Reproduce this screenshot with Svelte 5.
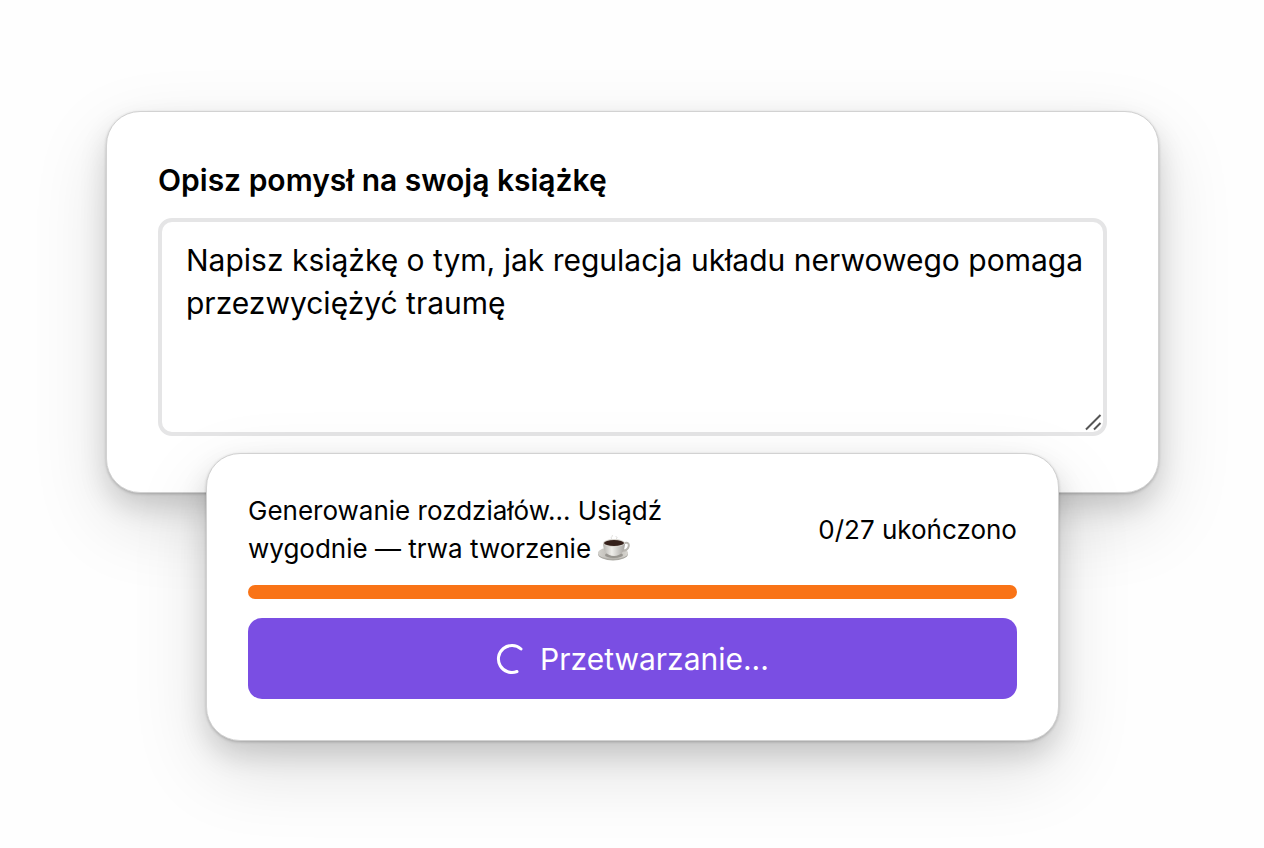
<script>
  let idea = $state('Napisz książkę o tym, jak regulacja układu nerwowego pomaga przezwyciężyć traumę');
  const done = 0;
  const total = 27;
</script>

<main>
  <section class="card idea">
    <label for="idea">Opisz pomysł na swoją książkę</label>
    <div class="field">
      <textarea id="idea" bind:value={idea}></textarea>
      <svg class="grip" width="18" height="18" viewBox="0 0 18 18" aria-hidden="true">
        <path d="M1 15.500 15.500 1M9 15.500 15.500 9" />
      </svg>
    </div>
  </section>

  <section class="card progress">
    <div class="status">
      <p>Generowanie rozdziałów... Usiądź wygodnie — trwa tworzenie
        <svg class="cup" width="32" height="28" viewBox="0 0 32 28" aria-hidden="true">
          <defs>
            <linearGradient id="china" x1="0" x2="1">
              <stop offset="0" stop-color="#b5b3ae" />
              <stop offset=".4" stop-color="#efeeea" />
              <stop offset="1" stop-color="#a5a29e" />
            </linearGradient>
            <linearGradient id="saucer" x1="0" x2="1">
              <stop offset="0" stop-color="#d5d3ce" />
              <stop offset=".5" stop-color="#b5b2ac" />
              <stop offset="1" stop-color="#d9d7d2" />
            </linearGradient>
          </defs>
          <path d="M14 5c-3-2 2-2 0-4M18 5c3-2-1-2 0-3" fill="none" stroke="#dddcda" stroke-width="1" />
          <ellipse cx="15" cy="20" rx="15" ry="6.500" fill="#aaa8a2" />
          <ellipse cx="15" cy="19" rx="15" ry="6" fill="url(#saucer)" />
          <ellipse cx="16" cy="21" rx="9" ry="3" fill="#98958f" />
          <path d="M25 10c5-3 7 0 5 4-1 2-4 3-7 3" fill="none" stroke="#b9b6b0" stroke-width="2" />
          <path d="M5 9c0 8 4 13 11 13s11-5 11-13z" fill="url(#china)" />
          <ellipse cx="16" cy="9" rx="11" ry="4" fill="#d9d6d0" />
          <ellipse cx="16" cy="9" rx="10" ry="3" fill="#35201a" />
        </svg>
      </p>
      <span>{done}/{total} ukończono</span>
    </div>
    <div class="bar" role="progressbar" aria-label="Postęp" aria-valuemin="0" aria-valuemax={total} aria-valuenow={done}></div>
    <button type="button">
      <svg width="30" height="32" viewBox="0 0 30 32" aria-hidden="true">
        <path d="M25 6A13.500 13.500 0 1 0 21 28.500" />
      </svg>
      <span>Przetwarzanie...</span>
    </button>
  </section>
</main>

<style>
  :global(body) { margin: 0; background: #fefefe; }
  * { box-sizing: border-box; }
  main {
    min-height: 100vh;
    padding: 111px 105px 106px 106px;
    display: flex;
    flex-direction: column;
    align-items: center;
    font-family: Inter, "Liberation Sans", sans-serif;
    color: #000;
  }
  .card {
    background: #fff;
    border: 1px solid #d2d2d2;
    border-radius: 34px;
    box-shadow: 0 1px 3px rgb(0 0 0 / 20%), 0 14px 28px rgb(0 0 0 / 14%), 0 28px 76px rgb(0 0 0 / 13%);
  }
  .idea { width: 100%; padding: 46px 51px 56px; }
  label { display: block; font-size: 30px; line-height: 44px; font-weight: 600; margin-bottom: 16px; }
  .field { position: relative; display: flex; }
  textarea {
    width: 100%;
    height: 218px;
    padding: 17px 16px 17px 24px;
    border: 4px solid #e5e5e6;
    border-radius: 14px;
    background: #fff;
    color: inherit;
    font: 400 30px/43px Inter, "Liberation Sans", sans-serif;
    resize: none;
    outline: none;
    overflow: hidden;
  }
  .grip { position: absolute; right: 4px; bottom: 4px; fill: none; stroke: #555; stroke-width: 2; }
  .progress { width: 81%; margin-top: -40px; padding: 38px 41px 41px; position: relative; }
  .status { display: flex; align-items: center; justify-content: space-between; font-size: 26px; line-height: 38px; }
  p { margin: 0; max-width: 440px; }
  .cup { vertical-align: -4px; }
  .bar { height: 14px; margin: 17px 0 19px; border-radius: 7px; background: #f97316; }
  button {
    width: 100%;
    height: 81px;
    border: 0;
    border-radius: 14px;
    background: #7a4ee3;
    color: #fff;
    display: flex;
    align-items: center;
    justify-content: center;
    gap: 14px;
    font: 400 30px/40px Inter, "Liberation Sans", sans-serif;
  }
  button path { fill: none; stroke: #fff; stroke-width: 3; stroke-linecap: round; }
</style>
